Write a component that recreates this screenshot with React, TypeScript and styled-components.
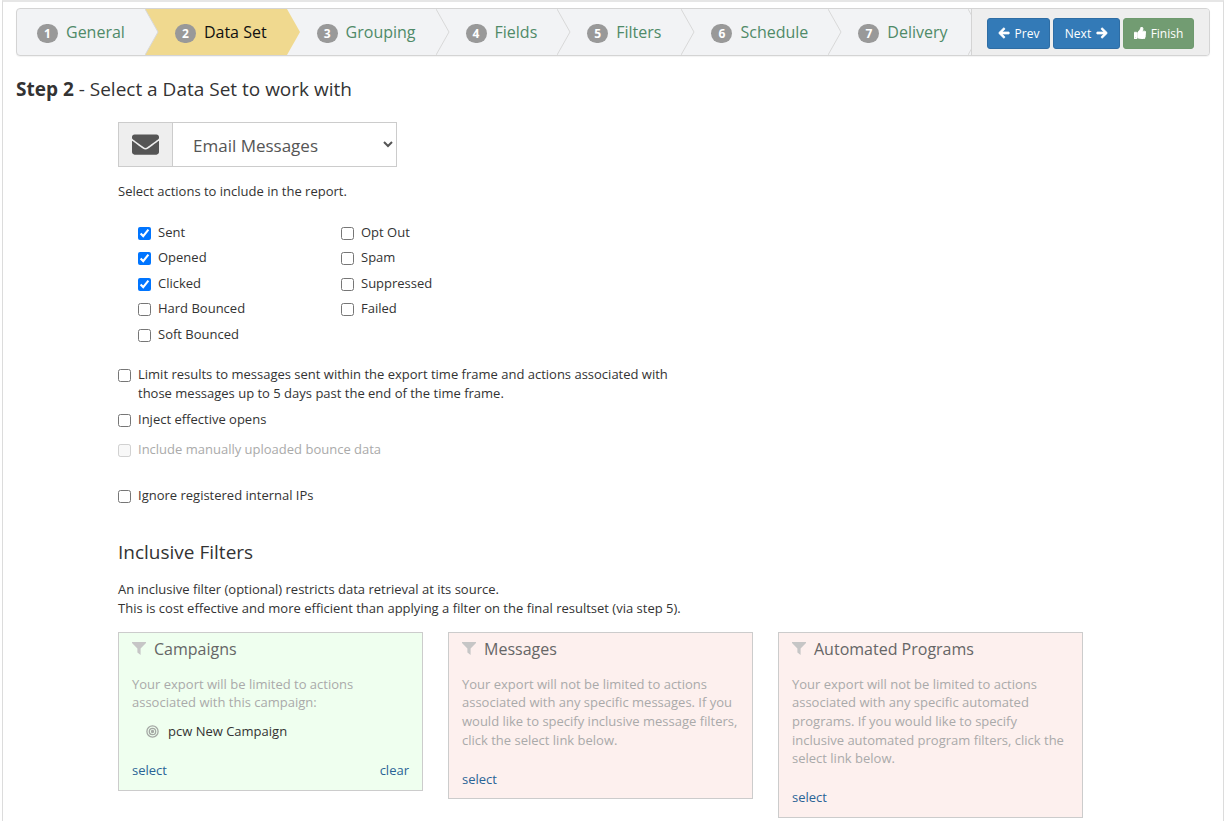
import React from 'react';
import styled, { createGlobalStyle } from 'styled-components';
import { FaArrowLeft, FaArrowRight, FaEnvelope, FaThumbsUp } from 'react-icons/fa';

const GlobalStyle = createGlobalStyle`
  html, body {
    margin: 0;
    padding: 0;
    background: #fff;
    height: 100%;
    overflow: hidden;
  }
  body {
    font-family: "Open Sans", "Liberation Sans", sans-serif;
    font-size: 13px;
    color: #333;
  }
`;

const Page = styled.div`
  box-sizing: border-box;
  width: 1222px;
  height: 821px;
  margin-left: 2px;
  overflow: hidden;
  padding: 6px 12px 0 13px;
  border-top: 2px solid #e6e6e6;
  border-left: 1px solid #dcdcdc;
  border-right: 1px solid #dcdcdc;
`;

const Wizard = styled.div`
  display: flex;
  box-sizing: border-box;
  width: 1194px;
  height: 48px;
  border: 1px solid #d4d4d4;
  border-radius: 4px;
  background: #f2f3f5;
  overflow: hidden;
  box-shadow: 0 1px 1px rgba(0, 0, 0, 0.05);
`;

const Steps = styled.div`
  display: flex;
  flex: 1;
  overflow: hidden;
`;

const Step = styled.div<{ $active?: boolean; $first?: boolean }>`
  position: relative;
  display: flex;
  align-items: center;
  gap: 8px;
  height: 46px;
  padding: 0 20px 0 ${p => (p.$first ? '20px' : '30px')};
  font-size: 16px;
  color: ${p => (p.$active ? '#111' : '#4f8a68')};
  background: ${p => (p.$active ? '#f0d98f' : 'transparent')};
`;

const Arrow = styled.svg`
  position: absolute;
  top: 0;
  left: 100%;
  width: 14px;
  height: 46px;
  z-index: 1;
`;

const Badge = styled.span`
  display: inline-flex;
  align-items: center;
  justify-content: center;
  width: 21px;
  height: 19px;
  margin-top: 3px;
  border-radius: 10px;
  background: #999;
  color: #fff;
  font-size: 12px;
  font-weight: 700;
`;

const Actions = styled.div`
  display: flex;
  align-items: center;
  gap: 3px;
  box-sizing: border-box;
  width: 238px;
  padding: 2px 0 0 15px;
  border-left: 1px solid #d4d4d4;
  background: #eee;
  position: relative;
  z-index: 2;
`;

const WizardButton = styled.button<{ $finish?: boolean; $w: number }>`
  display: inline-flex;
  align-items: center;
  justify-content: center;
  gap: 5px;
  box-sizing: border-box;
  width: ${p => p.$w}px;
  height: 31px;
  padding: 0;
  border: 1px solid ${p => (p.$finish ? '#6e9a6e' : '#2e6da4')};
  border-radius: 3px;
  background: ${p => (p.$finish ? '#729c72' : '#337ab7')};
  color: #fff;
  font-family: inherit;
  font-size: 12px;
  svg {
    font-size: 12px;
    stroke: currentColor;
    stroke-width: 36;
  }
`;

const Heading = styled.h2`
  margin: 21px 0 0;
  font-size: 19px;
  font-weight: 400;
  line-height: 25px;
  color: #333;
  b {
    font-weight: 700;
  }
`;

const Content = styled.div`
  padding-left: 102px;
`;

const SelectGroup = styled.div`
  display: flex;
  box-sizing: border-box;
  width: 279px;
  height: 45px;
  margin-top: 20px;
  border: 1px solid #ccc;
`;

const SelectIcon = styled.div`
  display: flex;
  align-items: center;
  justify-content: center;
  width: 53px;
  background: #eee;
  border-right: 1px solid #ccc;
  color: #555;
  font-size: 27px;
`;

const DataSetSelect = styled.select`
  flex: 1;
  min-width: 0;
  border: none;
  background: #fff;
  padding: 2px 9px 0 16px;
  font-family: inherit;
  font-size: 17px;
  color: #555;
  outline: none;
`;

const Hint = styled.p`
  margin: 16px 0 0;
  line-height: 17px;
`;

const CheckColumns = styled.div`
  display: flex;
  margin: 19px 0 0 20px;
`;

const CheckColumn = styled.div`
  display: flex;
  flex-direction: column;
  width: 203px;
`;

const ActionLabel = styled.label`
  display: flex;
  align-items: center;
  gap: 7px;
  height: 25.5px;
  input {
    width: 13px;
    height: 13px;
    margin: 3px 0 0;
  }
`;

const Options = styled.div`
  display: flex;
  flex-direction: column;
  margin-top: 18px;
  width: 560px;
`;

const OptionLabel = styled.label<{ $disabled?: boolean; $gap?: number }>`
  display: flex;
  align-items: flex-start;
  gap: 7px;
  line-height: 19px;
  margin-top: ${p => p.$gap ?? 0}px;
  color: ${p => (p.$disabled ? '#aaa' : '#333')};
  input {
    flex: none;
    width: 13px;
    height: 13px;
    margin: 4px 0 0;
  }
`;

const SectionTitle = styled.h3`
  margin: 35px 0 0;
  font-size: 19px;
  font-weight: 400;
  line-height: 25px;
  color: #333;
`;

const Intro = styled.p`
  margin: 15px 0 0;
  line-height: 19px;
`;

const Cards = styled.div`
  display: flex;
  align-items: flex-start;
  gap: 25px;
  margin-top: 14px;
`;

const Card = styled.div<{ $on?: boolean; $h: number }>`
  box-sizing: border-box;
  display: flex;
  flex-direction: column;
  width: 305px;
  height: ${p => p.$h}px;
  padding: 5px 13px 0;
  border: 1px solid #ccc;
  background: ${p => (p.$on ? '#efffef' : '#fdf0ee')};
`;

const CardTitle = styled.div`
  display: flex;
  align-items: center;
  gap: 8px;
  font-size: 16px;
  line-height: 22px;
  color: #666;
`;

const FunnelIcon = styled.svg`
  width: 14px;
  height: 13px;
  flex: none;
  fill: #c6c6c6;
`;

const CardText = styled.p`
  margin: 15px 0 0;
  line-height: 18.7px;
  color: #aaa;
`;

const Campaign = styled.div`
  display: flex;
  align-items: center;
  gap: 9px;
  margin: 10px 0 0 14px;
  line-height: 19px;
`;

const TargetIcon = styled.svg`
  width: 13px;
  height: 13px;
  flex: none;
  fill: none;
  stroke: #a4a8a4;
  stroke-width: 1.3;
`;

const CardLinks = styled.div<{ $pb?: number }>`
  display: flex;
  justify-content: space-between;
  margin-top: auto;
  padding-bottom: ${p => p.$pb ?? 10}px;
  line-height: 19px;
`;

const TextLink = styled.a`
  color: #2a6496;
  text-decoration: none;
`;

const Funnel = () => (
  <FunnelIcon viewBox="0 0 14 13">
    <path d="M0 0H14V1L8.6 6.5V13L5.4 10.5V6.5L0 1Z" />
  </FunnelIcon>
);

const Target = () => (
  <TargetIcon viewBox="0 0 13 13">
    <circle cx="6.5" cy="6.5" r="5.6" />
    <circle cx="6.5" cy="6.5" r="3.2" />
    <circle cx="6.5" cy="6.5" r="1" fill="#a4a8a4" />
  </TargetIcon>
);

const steps = ['General', 'Data Set', 'Grouping', 'Fields', 'Filters', 'Schedule', 'Delivery'];
const leftActions = [
  { name: 'Sent', on: true },
  { name: 'Opened', on: true },
  { name: 'Clicked', on: true },
  { name: 'Hard Bounced' },
  { name: 'Soft Bounced' },
];
const rightActions = ['Opt Out', 'Spam', 'Suppressed', 'Failed'];

export default function App() {
  return (
    <Page>
      <GlobalStyle />
      <Wizard>
        <Steps>
          {steps.map((s, i) => {
            const active = i === 1;
            return (
              <Step key={s} $active={active} $first={i === 0}>
                <Badge>{i + 1}</Badge>
                {s}
                {/* the chevron divider sits over the next step */}
                <Arrow viewBox="0 0 14 46" preserveAspectRatio="none">
                  <polygon
                    points="0,0 13,23 0,46"
                    fill={active ? '#f0d98f' : '#f2f3f5'}
                  />
                  {!active && (
                    <polyline points="0,0 13,23 0,46" fill="none" stroke="#d8d8d8" strokeWidth="1" />
                  )}
                </Arrow>
              </Step>
            );
          })}
        </Steps>
        <Actions>
          <WizardButton $w={63}><FaArrowLeft /> Prev</WizardButton>
          <WizardButton $w={67}>Next <FaArrowRight /></WizardButton>
          <WizardButton $w={71} $finish><FaThumbsUp /> Finish</WizardButton>
        </Actions>
      </Wizard>

      <Heading><b>Step 2</b> - Select a Data Set to work with</Heading>

      <Content>
        <SelectGroup>
          <SelectIcon><FaEnvelope /></SelectIcon>
          <DataSetSelect defaultValue="email">
            <option value="email">Email Messages</option>
          </DataSetSelect>
        </SelectGroup>

        <Hint>Select actions to include in the report.</Hint>

        <CheckColumns>
          <CheckColumn>
            {leftActions.map(a => (
              <ActionLabel key={a.name}>
                <input type="checkbox" defaultChecked={a.on} />
                {a.name}
              </ActionLabel>
            ))}
          </CheckColumn>
          <CheckColumn>
            {rightActions.map(a => (
              <ActionLabel key={a}>
                <input type="checkbox" />
                {a}
              </ActionLabel>
            ))}
          </CheckColumn>
        </CheckColumns>

        <Options>
          <OptionLabel>
            <input type="checkbox" />
            <span>
              Limit results to messages sent within the export time frame and actions associated with those messages up to 5 days past the end of the time frame.
            </span>
          </OptionLabel>
          <OptionLabel $gap={7}>
            <input type="checkbox" />
            Inject effective opens
          </OptionLabel>
          <OptionLabel $disabled $gap={11}>
            <input type="checkbox" disabled />
            Include manually uploaded bounce data
          </OptionLabel>
          <OptionLabel $gap={27}>
            <input type="checkbox" />
            Ignore registered internal IPs
          </OptionLabel>
        </Options>

        <SectionTitle>Inclusive Filters</SectionTitle>
        <Intro>
          An inclusive filter (optional) restricts data retrieval at its source.<br />
          This is cost effective and more efficient than applying a filter on the final resultset (via step 5).
        </Intro>

        <Cards>
          <Card $on $h={159}>
            <CardTitle><Funnel /> Campaigns</CardTitle>
            <CardText>Your export will be limited to actions associated with this campaign:</CardText>
            <Campaign><Target /> pcw New Campaign</Campaign>
            <CardLinks>
              <TextLink href="#">select</TextLink>
              <TextLink href="#">clear</TextLink>
            </CardLinks>
          </Card>
          <Card $h={167}>
            <CardTitle><Funnel /> Messages</CardTitle>
            <CardText>Your export will not be limited to actions associated with any specific messages. If you would like to specify inclusive message filters, click the select link below.</CardText>
            <CardLinks $pb={9}><TextLink href="#">select</TextLink></CardLinks>
          </Card>
          <Card $h={186}>
            <CardTitle><Funnel /> Automated Programs</CardTitle>
            <CardText>Your export will not be limited to actions associated with any specific automated programs. If you would like to specify inclusive automated program filters, click the select link below.</CardText>
            <CardLinks><TextLink href="#">select</TextLink></CardLinks>
          </Card>
        </Cards>
      </Content>
    </Page>
  );
}
